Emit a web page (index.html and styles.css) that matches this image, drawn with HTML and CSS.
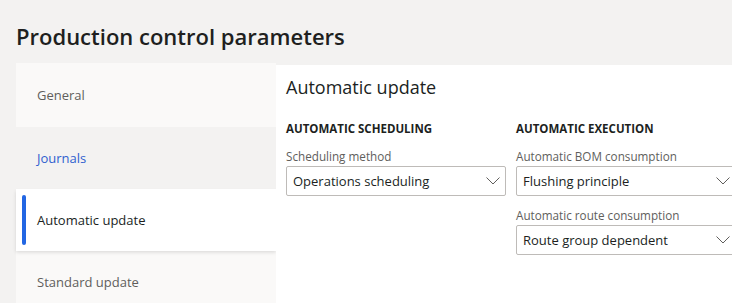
FILE: index.html
```html
<!DOCTYPE html>
<html lang="en">
<head>
  <meta charset="UTF-8">
  <title>Production control parameters</title>
  <link rel="stylesheet" href="styles.css">
</head>
<body>
<h1 class="page-title">Production control parameters</h1>
<div class="layout">
  <ul class="tabs">
    <li class="tab tab-first">General</li>
    <li class="tab tab-hover">Journals</li>
    <li class="tab tab-active">Automatic update</li>
    <li class="tab">Standard update</li>
  </ul>
  <div class="panel">
    <h2 class="panel-title">Automatic update</h2>
    <div class="groups">
      <div class="group">
        <h3 class="group-title">AUTOMATIC SCHEDULING</h3>
        <label class="field-label">Scheduling method</label>
        <div class="select">
          <span>Operations scheduling</span>
          <svg class="chevron" width="14" height="8" viewBox="0 0 14 8"><polyline points="0.5,0.5 7,7 13.5,0.5" fill="none" stroke="#605e5c" stroke-width="1"/></svg>
        </div>
      </div>
      <div class="group">
        <h3 class="group-title">AUTOMATIC EXECUTION</h3>
        <label class="field-label">Automatic BOM consumption</label>
        <div class="select">
          <span>Flushing principle</span>
          <svg class="chevron" width="14" height="8" viewBox="0 0 14 8"><polyline points="0.5,0.5 7,7 13.5,0.5" fill="none" stroke="#605e5c" stroke-width="1"/></svg>
        </div>
        <label class="field-label">Automatic route consumption</label>
        <div class="select">
          <span>Route group dependent</span>
          <svg class="chevron" width="14" height="8" viewBox="0 0 14 8"><polyline points="0.5,0.5 7,7 13.5,0.5" fill="none" stroke="#605e5c" stroke-width="1"/></svg>
        </div>
      </div>
    </div>
  </div>
</div>
</body>
</html>
```

FILE: styles.css
```css
* {
  margin: 0;
  padding: 0;
  box-sizing: border-box;
}
html, body {
  height: 100%;
  overflow: hidden;
}
body {
  background-color: #f3f2f1;
  font-family: "Open Sans", sans-serif;
  color: #201f1e;
}
.page-title {
  font-size: 22px;
  line-height: 32px;
  font-weight: 600;
  padding: 20px 0 0 16px;
  color: #201f1e;
}
.layout {
  display: flex;
  margin-top: 11px;
  padding-left: 16px;
  height: 240px;
}
.tabs {
  width: 260px;
  flex: none;
  list-style: none;
}
.tab {
  height: 62px;
  line-height: 62px;
  padding-left: 21px;
  font-size: 13px;
  color: #605e5c;
  background-color: #faf9f8;
  position: relative;
}
.tab-first {
  height: 64px;
  line-height: 64px;
}
.tab-hover {
  background-color: #f3f2f1;
  color: #2f5fcf;
}
.tab-active {
  background-color: #fff;
  color: #201f1e;
  box-shadow: 0 1.6px 3.6px rgba(0, 0, 0, 0.13);
  z-index: 1;
}
.tab-active::before {
  content: "";
  position: absolute;
  left: 6px;
  top: 6px;
  bottom: 6px;
  width: 4px;
  border-radius: 2px;
  background-color: #2266e3;
}
.panel {
  flex: 1;
  margin-top: 2px;
  background-color: #fff;
  padding: 8px 0 0 10px;
  position: relative;
  z-index: 2;
  overflow: hidden;
}
.panel-title {
  font-size: 18px;
  line-height: 28px;
  font-weight: 400;
  color: #201f1e;
}
.groups {
  display: flex;
  gap: 10px;
  margin-top: 20px;
}
.group {
  width: 220px;
  flex: none;
}
.group-title {
  font-size: 11.5px;
  line-height: 16px;
  font-weight: 700;
  color: #201f1e;
}
.field-label {
  display: block;
  margin-top: 11px;
  font-size: 11.7px;
  line-height: 16px;
  color: #605e5c;
}
.select {
  display: flex;
  align-items: center;
  justify-content: space-between;
  margin-top: 2px;
  height: 30px;
  border: 1px solid #bebbb8;
  border-radius: 2px;
  padding: 0 5px 0 6px;
  font-size: 13px;
  color: #201f1e;
}
.chevron {
  display: block;
}
```
